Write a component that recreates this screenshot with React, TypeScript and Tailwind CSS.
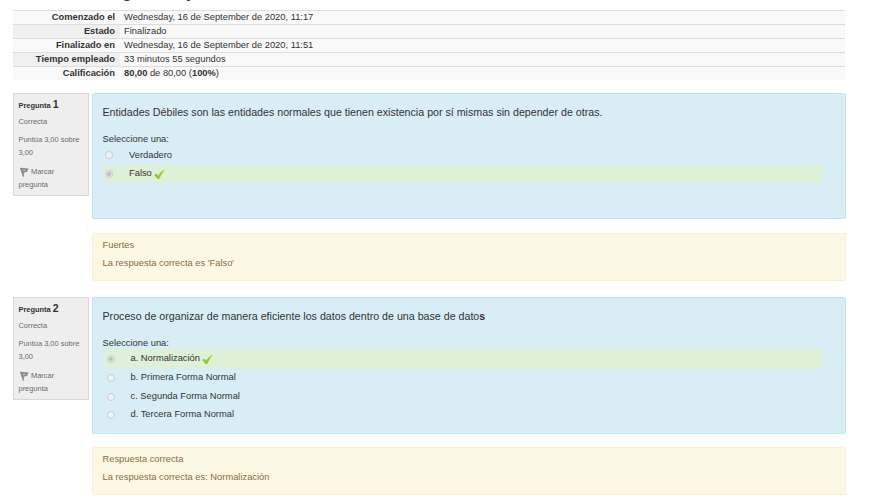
import React from "react";

const summary = [
  { label: "Comenzado el", value: "Wednesday, 16 de September de 2020, 11:17" },
  { label: "Estado", value: "Finalizado" },
  { label: "Finalizado en", value: "Wednesday, 16 de September de 2020, 11:51" },
  { label: "Tiempo empleado", value: "33 minutos 55 segundos" },
];

function Row({ label, striped, children }: { label: string; striped?: boolean; children: React.ReactNode }) {
  return (
    <div className="flex h-[14px] border-t border-[#dddddd] bg-[#f9f9f9] text-[9.33px] leading-[13px]">
      <div className={(striped ? "bg-[#f0f0f0] " : "") + "w-[107px] pr-[5px] text-right font-bold"}>{label}</div>
      <div className="pl-1">{children}</div>
    </div>
  );
}

function Flag() {
  return (
    <svg className="ml-px mr-[2.5px] inline-block align-[-3px]" width="9" height="10" viewBox="0 0 9 10">
      <path d="M0.8 1 L3.6 9.6" stroke="#858585" strokeWidth="1.4" />
      <path d="M0.3 0.8 L8.5 1.4 L7 5.2 L4.8 5.1 L3.8 7.2 L2.2 6 Z" fill="#8b8b8b" />
      <path d="M2.8 2.8 L6 3 L5 4 L3.4 4.6 Z" fill="#bdbdbd" />
    </svg>
  );
}

function Check() {
  return (
    <svg className="ml-[2px] shrink-0" width="11" height="11" viewBox="0 0 11 11">
      <path d="M0.3 6 L2.2 4.6 L4.1 6.6 Q6.5 2.6 10.8 0.2 Q7.6 4.8 5.2 10 L3.5 10 Z" fill="#90cc35" />
    </svg>
  );
}

function Radio({ on }: { on?: boolean }) {
  return (
    <span className={(on ? "bg-[#e4e9e0] " : "bg-[#eef3f6] ") + "flex h-[8px] w-[8px] shrink-0 items-center justify-center rounded-full border border-[#c6cdd0]"}>
      {on && <span className="h-1 w-1 rounded-full bg-[#bcc0ba]" />}
    </span>
  );
}

function Info({ n }: { n: number }) {
  return (
    <aside className="h-[103px] w-[76px] shrink-0 border border-[#d8d8d8] bg-[#eeeeee] pl-[4.5px] pt-[3px] text-[7.45px] text-[#6b6b6b]">
      <div className="flex h-[15px] items-baseline font-bold leading-[15px] text-[#333333]">
        <span className="text-[7.45px]">Pregunta</span>
        <span className="ml-[2px] text-[10.6px]">{n}</span>
      </div>
      <div className="mt-[3px] leading-[13px]">Correcta</div>
      <div className="mt-[5px] whitespace-nowrap leading-[13px]">Puntúa 3,00 sobre<br />3,00</div>
      <div className="mt-[6px] leading-[13px]"><Flag />Marcar<br />pregunta</div>
    </aside>
  );
}

function Feedback({ title, children }: { title: string; children: React.ReactNode }) {
  return (
    <div className="ml-[79px] h-[48px] rounded-[2px] border border-[#fbeed5] bg-[#fcf8e3] pl-[9.5px] pt-1 text-[9.33px] text-[#8a6d45]">
      <div className="h-[14px] leading-[14px]">{title}</div>
      <div className="mt-[4px] h-[14px] leading-[14px]">{children}</div>
    </div>
  );
}

export default function App() {
  return (
    <main className="h-[504px] w-[875px] overflow-hidden bg-white pl-[13px] font-['Liberation_Sans',Arial,sans-serif] text-[#333333]">
      <header className="h-[10px] overflow-hidden pl-[108px]">
        <h1 className="-mt-[22px] flex gap-[53px] text-[22px] leading-[22px]"><span>g</span><span>y</span></h1>
      </header>
      <section className="w-[832px]">
        {summary.map((r, i) => (
          <Row key={r.label} label={r.label} striped={i % 2 === 1}>{r.value}</Row>
        ))}
        <Row label="Calificación"><b>80,00</b> de 80,00 (<b>100%</b>)</Row>
      </section>

      <section className="mt-[13px] w-[833px]">
        <div className="flex items-start gap-[3px]">
          <Info n={1} />
          <div className="h-[126px] w-[754px] rounded-[2px] border border-[#bce8f1] bg-[#d9edf7] pl-[9.5px] pt-[11px]">
            <p className="h-[15px] text-[10.66px] leading-[15px]">Entidades Débiles son las entidades normales que tienen existencia por sí mismas sin depender de otras.</p>
            <div className="mt-[12px] h-[13px] text-[9.33px] leading-[14px]">Seleccione una:</div>
            <div className="flex h-[20px] items-center pl-[2.5px] text-[9.33px]"><Radio /><span className="ml-[16px] pt-px">Verdadero</span></div>
            <div className="flex h-[18px] w-[719px] items-center bg-[#dff0d8] pl-[2.5px] text-[9.33px]"><Radio on /><span className="ml-[16px]">Falso</span><Check /></div>
          </div>
        </div>
        <div className="mt-[14px]"><Feedback title="Fuertes">La respuesta correcta es 'Falso'</Feedback></div>
      </section>

      <section className="mt-4 w-[833px]">
        <div className="flex items-start gap-[3px]">
          <Info n={2} />
          <div className="h-[137px] w-[754px] rounded-[2px] border border-[#bce8f1] bg-[#d9edf7] pl-[9.5px] pt-[11px]">
            <p className="h-[15px] text-[10.66px] leading-[15px]">Proceso de organizar de manera eficiente los datos dentro de una base de dato<b>s</b></p>
            <div className="mt-[12px] h-[13px] text-[9.33px] leading-[14px]">Seleccione una:</div>
            <div className="flex h-[20px] w-[719px] items-center bg-[#dff0d8] pl-[4.5px] text-[9.33px]"><Radio on /><span className="ml-[15.5px]">a. Normalización</span><Check /></div>
            {["b. Primera Forma Normal", "c. Segunda Forma Normal", "d. Tercera Forma Normal"].map((t) => (
              <div key={t} className="flex h-[18.5px] items-center pl-[4.5px] text-[9.33px]"><Radio /><span className="ml-[15.5px]">{t}</span></div>
            ))}
          </div>
        </div>
        <div className="mt-[13px]"><Feedback title="Respuesta correcta">La respuesta correcta es: Normalización</Feedback></div>
      </section>
    </main>
  );
}
